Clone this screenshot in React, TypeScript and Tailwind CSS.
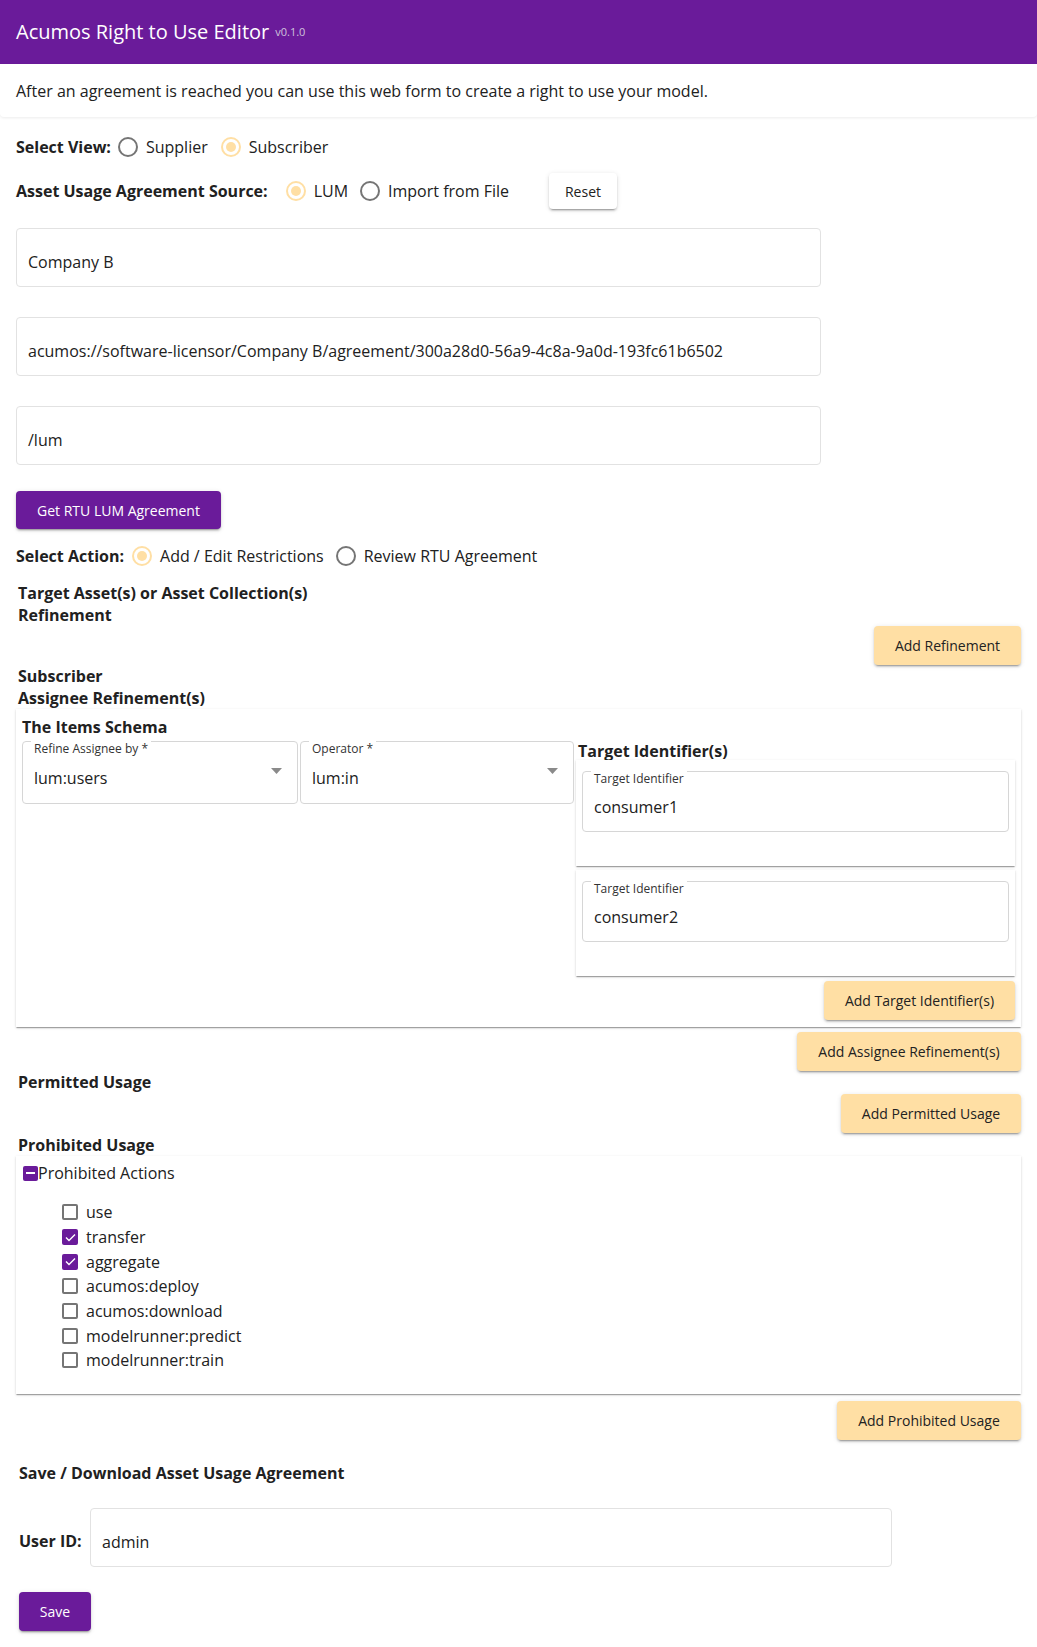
import React from 'react';

const paper =
  'bg-white shadow-[0px_2px_1px_-1px_rgba(0,0,0,0.2),0px_1px_1px_0px_rgba(0,0,0,0.14),0px_1px_3px_0px_rgba(0,0,0,0.12)]';
const softPaper = 'bg-white shadow-[0px_1px_3px_0px_rgba(0,0,0,0.08)]';
const btnShadow =
  'shadow-[0px_3px_1px_-2px_rgba(0,0,0,0.2),0px_2px_2px_0px_rgba(0,0,0,0.14),0px_1px_5px_0px_rgba(0,0,0,0.12)]';

const actions = [
  { name: 'use', checked: false },
  { name: 'transfer', checked: true },
  { name: 'aggregate', checked: true },
  { name: 'acumos:deploy', checked: false },
  { name: 'acumos:download', checked: false },
  { name: 'modelrunner:predict', checked: false },
  { name: 'modelrunner:train', checked: false },
];

function Radio({ checked, label }: { checked?: boolean; label: string }) {
  return (
    <label className="flex items-center gap-[8px]">
      {checked ? (
        <span className="w-[20px] h-[20px] rounded-full border-2 border-[#ffdfa4] flex items-center justify-center">
          <span className="w-[10px] h-[10px] rounded-full bg-[#ffdfa4]" />
        </span>
      ) : (
        <span className="w-[20px] h-[20px] rounded-full border-2 border-[#757575]" />
      )}
      <span className="text-[16px]">{label}</span>
    </label>
  );
}

function OrangeButton({ children, w }: { children: React.ReactNode; w: string }) {
  return (
    <button
      className={`${w} h-[39px] rounded-[4px] bg-[#ffdfa4] text-[14px] text-[#222] ${btnShadow}`}
    >
      {children}
    </button>
  );
}

function TextInput({ value }: { value: string }) {
  return (
    <div className="h-[59px] border border-[#e2e2e2] rounded-[4px] flex items-center px-[11px] pt-[9px] text-[16px]">
      {value}
    </div>
  );
}

function Outlined({
  label,
  value,
  className,
  select,
}: {
  label: string;
  value: string;
  className: string;
  select?: boolean;
}) {
  return (
    <div className={`relative border border-[#d6d6d6] rounded-[4px] ${className}`}>
      <span className="absolute -top-[1px] left-[8px] bg-white px-[3px] text-[12px] leading-[16px] text-[#333]">
        {label}
      </span>
      <div className="h-full flex items-center px-[11px] pt-[10px] text-[16px]">{value}</div>
      {select && (
        <svg
          className="absolute right-[15px] top-[26px]"
          width="11"
          height="6"
          viewBox="0 0 11 6"
        >
          <path d="M0 0h11L5.5 6z" fill="#8a8a8a" />
        </svg>
      )}
    </div>
  );
}

export default function App() {
  return (
    <div className="min-h-screen bg-white font-['Open_Sans',sans-serif] text-[#212121]">
      <header className="h-16 bg-[#6a1b9a] px-4 flex items-center">
        <span className="text-[20px] text-white">Acumos Right to Use Editor</span>
        <span className="ml-[6px] mt-[1px] text-[11px] text-[#cfc3dc]">v0.1.0</span>
      </header>

      <div className={`h-[53px] px-4 flex items-center text-[16px] rounded-b-[4px] ${softPaper}`}>
        After an agreement is reached you can use this web form to create a right to use your model.
      </div>

      <main className="px-4 flex flex-col">
        {/* view + source */}
        <div className="mt-[15px] h-[30px] flex items-center">
          <span className="font-bold text-[16px] mr-[7px]">Select View:</span>
          <div className="flex items-center gap-[13px]">
            <Radio label="Supplier" />
            <Radio checked label="Subscriber" />
          </div>
        </div>
        <div className="mt-[11px] h-[36px] flex items-center">
          <span className="font-bold text-[16px] mr-[18px]">Asset Usage Agreement Source:</span>
          <div className="flex items-center gap-[12px]">
            <Radio checked label="LUM" />
            <Radio label="Import from File" />
          </div>
          <button
            className={`ml-[40px] w-[68px] h-[36px] rounded-[4px] bg-white text-[14px] ${btnShadow}`}
          >
            Reset
          </button>
        </div>

        <div className="w-[805px] flex flex-col gap-[30px] mt-[19px]">
          <TextInput value="Company B" />
          <TextInput value="acumos://software-licensor/Company B/agreement/300a28d0-56a9-4c8a-9a0d-193fc61b6502" />
          <TextInput value="/lum" />
        </div>

        <button
          className={`mt-[26px] w-[205px] h-[38px] rounded-[4px] bg-[#6a1b9a] text-white text-[14px] ${btnShadow}`}
        >
          Get RTU LUM Agreement
        </button>

        <div className="mt-[12px] h-[30px] flex items-center">
          <span className="font-bold text-[16px] mr-[8px]">Select Action:</span>
          <div className="flex items-center gap-[12px]">
            <Radio checked label="Add / Edit Restrictions" />
            <Radio label="Review RTU Agreement" />
          </div>
        </div>

        {/* target refinement */}
        <h3 className="mt-[11px] pl-[2px] font-bold text-[16px] leading-[22px]">
          Target Asset(s) or Asset Collection(s)
          <br />
          Refinement
        </h3>
        <div className="self-end">
          <OrangeButton w="w-[147px]">Add Refinement</OrangeButton>
        </div>

        {/* assignee refinement */}
        <h3 className="pl-[2px] font-bold text-[16px] leading-[22px]">
          Subscriber
          <br />
          Assignee Refinement(s)
        </h3>
        <div className={`${paper} px-[6px] pt-[7px] pb-[7px] flex flex-col`}>
          <h4 className="font-bold text-[16px] leading-[22px]">The Items Schema</h4>
          <div className="mt-[3px] flex gap-[2px]">
            <Outlined select label="Refine Assignee by *" value="lum:users" className="w-[276px] h-[63px]" />
            <Outlined select label="Operator *" value="lum:in" className="w-[274px] h-[63px]" />
            <div className="flex-1 flex flex-col">
              <h4 className="pl-[2px] pt-[1px] font-bold text-[16px] leading-[18px]">Target Identifier(s)</h4>
              <div className="flex flex-col gap-[4px]">
                {['consumer1', 'consumer2'].map((v) => (
                  <div key={v} className={`${paper} h-[106px] px-[6px] pt-[11px]`}>
                    <Outlined label="Target Identifier" value={v} className="h-[61px]" />
                  </div>
                ))}
              </div>
              <div className="self-end mt-[5px]">
                <OrangeButton w="w-[191px]">Add Target Identifier(s)</OrangeButton>
              </div>
            </div>
          </div>
        </div>
        <div className="self-end mt-[5px]">
          <OrangeButton w="w-[224px]">Add Assignee Refinement(s)</OrangeButton>
        </div>

        {/* permitted */}
        <h3 className="pl-[2px] font-bold text-[16px] leading-[22px]">Permitted Usage</h3>
        <div className="self-end mt-[1px]">
          <OrangeButton w="w-[180px]">Add Permitted Usage</OrangeButton>
        </div>

        {/* prohibited */}
        <h3 className="pl-[2px] pt-[1px] font-bold text-[16px] leading-[22px]">Prohibited Usage</h3>
        <div className={`${paper} pl-[7px] pt-[6px] pb-[21px]`}>
          <div className="flex items-center h-[22px] text-[16px]">
            <span className="w-[15px] h-[15px] rounded-[2px] bg-[#6a1b9a] flex items-center justify-center">
              <span className="w-[9px] h-[2px] bg-white" />
            </span>
            Prohibited Actions
          </div>
          <ul className="mt-[16px] pl-[39px] flex flex-col">
            {actions.map((a) => (
              <li key={a.name} className="h-[24.7px] flex items-center gap-[8px] text-[16px]">
                {a.checked ? (
                  <span className="w-[16px] h-[16px] rounded-[2px] bg-[#6a1b9a] flex items-center justify-center">
                    <svg width="11" height="9" viewBox="0 0 11 9">
                      <path d="M1 4.5l3 3L10 1.5" stroke="white" strokeWidth="1.4" fill="none" />
                    </svg>
                  </span>
                ) : (
                  <span className="w-[16px] h-[16px] rounded-[2px] border-2 border-[#757575]" />
                )}
                {a.name}
              </li>
            ))}
          </ul>
        </div>
        <div className="self-end mt-[7px]">
          <OrangeButton w="w-[184px]">Add Prohibited Usage</OrangeButton>
        </div>

        {/* save */}
        <h3 className="mt-[22px] pl-[3px] font-bold text-[16px] leading-[22px]">
          Save / Download Asset Usage Agreement
        </h3>
        <div className="mt-[24px] pl-[3px] flex items-center">
          <span className="w-[71px] font-bold text-[16px] pt-[8px]">User ID:</span>
          <div className="w-[802px]">
            <TextInput value="admin" />
          </div>
        </div>
        <button
          className={`mt-[25px] ml-[3px] w-[72px] h-[39px] rounded-[4px] bg-[#6a1b9a] text-white text-[14px] ${btnShadow}`}
        >
          Save
        </button>
        <div className="h-[15px]" />
      </main>
    </div>
  );
}
